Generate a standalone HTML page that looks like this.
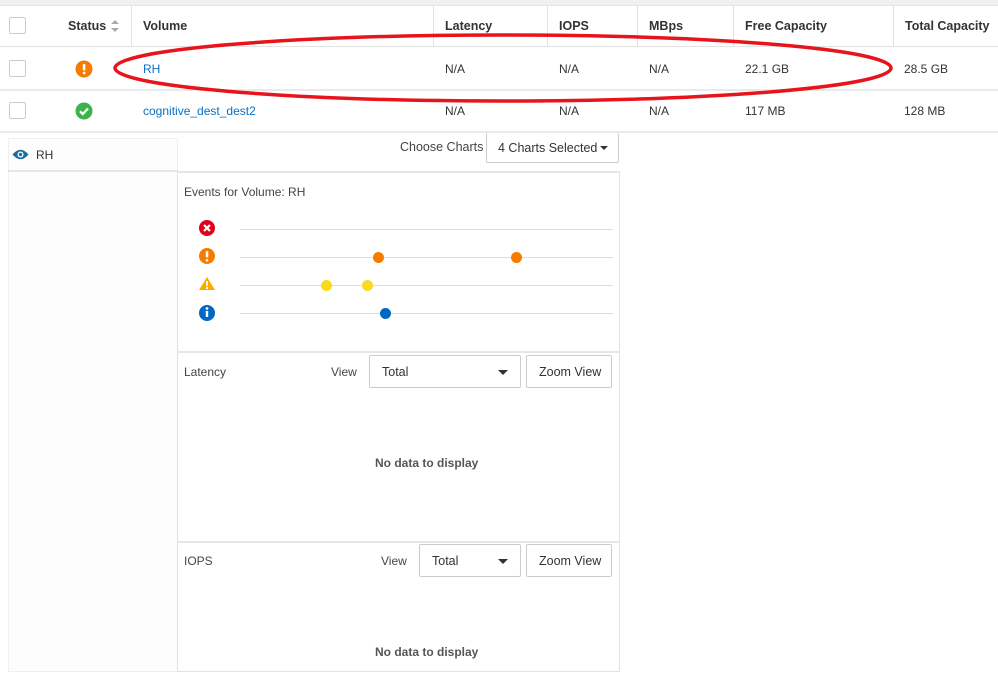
<!DOCTYPE html>
<html><head><meta charset="utf-8"><style>
*{box-sizing:border-box;margin:0;padding:0}
body{width:998px;height:681px;background:#fff;font-family:"Liberation Sans",sans-serif;font-size:12px;color:#333;position:relative;overflow:hidden}
.a{position:absolute}
.h{font-weight:bold;color:#333;font-size:12.5px}
.link{color:#0a6fc2}
.cb{position:absolute;width:17px;height:17px;border:1px solid #ccc;border-radius:2px;background:#fff}
.vl{position:absolute;width:1px;background:#e2e2e2}
.hl{position:absolute;height:1px;background:#e2e2e2}
.btn{position:absolute;border:1px solid #ccc;border-radius:2px;background:#fff;font-size:12.5px;color:#333}
.caret{position:absolute;width:0;height:0;border-left:5px solid transparent;border-right:5px solid transparent;border-top:5px solid #333}
.dot{position:absolute;width:11px;height:11px;border-radius:50%}
.nd{position:absolute;font-weight:bold;color:#555;font-size:12px}
</style></head><body>
<div class="a" style="left:0;top:0;width:998px;height:5px;background:#f0f0f0"></div>
<div class="hl" style="left:0;top:5px;width:998px;background:#e6e6e6"></div>
<div class="hl" style="left:0;top:46px;width:998px;height:1px"></div>
<div class="hl" style="left:0;top:89px;width:998px;height:2px;background:#eaeaea"></div>
<div class="hl" style="left:0;top:131px;width:998px;height:2px;background:#eaeaea"></div>
<div class="vl" style="left:131px;top:5px;height:41px"></div>
<div class="vl" style="left:433px;top:5px;height:41px"></div>
<div class="vl" style="left:547px;top:5px;height:41px"></div>
<div class="vl" style="left:637px;top:5px;height:41px"></div>
<div class="vl" style="left:733px;top:5px;height:41px"></div>
<div class="vl" style="left:893px;top:5px;height:41px"></div>

<div class="cb" style="left:9px;top:17px"></div>
<div class="cb" style="left:9px;top:60px"></div>
<div class="cb" style="left:9px;top:102px"></div>

<div class="a h" style="left:68px;top:19px">Status</div>
<svg class="a" style="left:110px;top:19px" width="10" height="14"><path d="M1 5 L5 1 L9 5Z M1 9 L5 13 L9 9Z" fill="#aaa"/></svg>
<div class="a h" style="left:143px;top:19px">Volume</div>
<div class="a h" style="left:445px;top:19px">Latency</div>
<div class="a h" style="left:559px;top:19px">IOPS</div>
<div class="a h" style="left:649px;top:19px">MBps</div>
<div class="a h" style="left:745px;top:19px">Free Capacity</div>
<div class="a h" style="left:905px;top:19px">Total Capacity</div>

<svg class="a" style="left:75px;top:60px" width="18" height="18"><circle cx="9" cy="9" r="8.5" fill="#f57c00"/><rect x="7.8" y="4" width="2.6" height="6.5" rx="1" fill="#fff"/><circle cx="9.1" cy="13" r="1.4" fill="#fff"/></svg>
<div class="a link" style="left:143px;top:62px">RH</div>
<div class="a" style="left:445px;top:62px">N/A</div>
<div class="a" style="left:559px;top:62px">N/A</div>
<div class="a" style="left:649px;top:62px">N/A</div>
<div class="a" style="left:745px;top:62px">22.1 GB</div>
<div class="a" style="left:904px;top:62px">28.5 GB</div>

<svg class="a" style="left:75px;top:102px" width="18" height="18"><circle cx="9" cy="9" r="8.5" fill="#3cb44b"/><path d="M5 9.3 L7.8 12 L13 6.5" stroke="#fff" stroke-width="2.2" fill="none"/></svg>
<div class="a link" style="left:143px;top:104px">cognitive_dest_dest2</div>
<div class="a" style="left:445px;top:104px">N/A</div>
<div class="a" style="left:559px;top:104px">N/A</div>
<div class="a" style="left:649px;top:104px">N/A</div>
<div class="a" style="left:745px;top:104px">117 MB</div>
<div class="a" style="left:904px;top:104px">128 MB</div>

<svg class="a" style="left:0;top:0" width="998" height="140"><ellipse cx="503" cy="68" rx="388" ry="33" fill="none" stroke="#e8141c" stroke-width="3.5"/></svg>

<!-- left panel -->
<div class="a" style="left:8px;top:138px;width:170px;height:534px;background:#fdfdfd;border:1px solid #f0f0f0"></div>
<div class="hl" style="left:8px;top:170px;width:170px;background:#e6e6e6;height:2px"></div>
<svg class="a" style="left:12px;top:148px" width="17" height="13"><path d="M0.5 6.5 Q8.5 -3 16.5 6.5 Q8.5 16 0.5 6.5Z" fill="#1d6ea0"/><circle cx="8.5" cy="6.5" r="3" fill="#fff"/><circle cx="8.5" cy="6.5" r="1.7" fill="#1d6ea0"/></svg>
<div class="a" style="left:36px;top:148px">RH</div>

<div class="a" style="left:400px;top:140px;font-size:12.5px;color:#444">Choose Charts</div>
<div class="btn" style="left:486px;top:133px;width:133px;height:30px;border-top:none"></div>
<div class="a" style="left:498px;top:141px;font-size:12.5px">4 Charts Selected</div>
<div class="caret" style="left:600px;top:146px;border-width:4px 4px 0 4px"></div>

<!-- chart panel -->
<div class="a" style="left:177px;top:171px;width:443px;height:501px;border:1px solid #e2e2e2;border-top:2px solid #e6e6e6"></div>
<div class="a" style="left:184px;top:185px;color:#444">Events for Volume: RH</div>
<div class="hl" style="left:240px;top:229px;width:373px;background:#ddd"></div>
<div class="hl" style="left:240px;top:257px;width:373px;background:#ddd"></div>
<div class="hl" style="left:240px;top:285px;width:373px;background:#ddd"></div>
<div class="hl" style="left:240px;top:313px;width:373px;background:#ddd"></div>
<svg class="a" style="left:198px;top:219px" width="18" height="104">
<circle cx="9" cy="9" r="8" fill="#e3001b"/><path d="M6 6 L12 12 M12 6 L6 12" stroke="#fff" stroke-width="2.2"/>
<circle cx="9" cy="37" r="8" fill="#f57c00"/><rect x="7.8" y="32" width="2.5" height="6.5" rx="1" fill="#fff"/><circle cx="9" cy="41.3" r="1.3" fill="#fff"/>
<path d="M9 58 L17 71 L1 71Z" fill="#fbab00"/><rect x="8" y="62" width="2" height="5" fill="#fff"/><rect x="8" y="68" width="2" height="2" fill="#fff"/>
<circle cx="9" cy="94" r="8" fill="#0067c5"/><rect x="7.8" y="92" width="2.4" height="6" fill="#fff"/><circle cx="9" cy="89.5" r="1.4" fill="#fff"/>
</svg>
<div class="dot" style="left:373px;top:252px;background:#f57c00"></div>
<div class="dot" style="left:511px;top:252px;background:#f57c00"></div>
<div class="dot" style="left:321px;top:280px;background:#fcd91a"></div>
<div class="dot" style="left:362px;top:280px;background:#fcd91a"></div>
<div class="dot" style="left:380px;top:308px;background:#0067c5"></div>

<div class="hl" style="left:178px;top:351px;width:441px;height:2px;background:#e6e6e6"></div>
<div class="a" style="left:184px;top:365px;color:#444">Latency</div>
<div class="a" style="left:331px;top:365px;color:#444">View</div>
<div class="btn" style="left:369px;top:355px;width:152px;height:33px"></div>
<div class="a" style="left:382px;top:365px;font-size:12.5px">Total</div>
<div class="caret" style="left:498px;top:370px"></div>
<div class="btn" style="left:526px;top:355px;width:86px;height:33px"></div>
<div class="a" style="left:539px;top:365px;font-size:12.5px">Zoom View</div>
<div class="nd" style="left:375px;top:456px">No data to display</div>

<div class="hl" style="left:178px;top:541px;width:441px;height:2px;background:#e6e6e6"></div>
<div class="a" style="left:184px;top:554px;color:#444">IOPS</div>
<div class="a" style="left:381px;top:554px;color:#444">View</div>
<div class="btn" style="left:419px;top:544px;width:102px;height:33px"></div>
<div class="a" style="left:432px;top:554px;font-size:12.5px">Total</div>
<div class="caret" style="left:498px;top:559px"></div>
<div class="btn" style="left:526px;top:544px;width:86px;height:33px"></div>
<div class="a" style="left:539px;top:554px;font-size:12.5px">Zoom View</div>
<div class="nd" style="left:375px;top:645px">No data to display</div>
</body></html>
